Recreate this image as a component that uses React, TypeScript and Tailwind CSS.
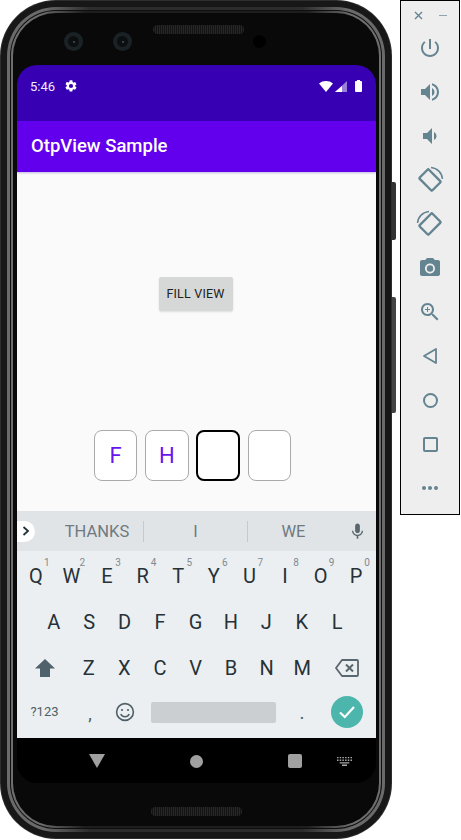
import React from 'react';

const TOP_ROW = [
  ['Q', '1'],
  ['W', '2'],
  ['E', '3'],
  ['R', '4'],
  ['T', '5'],
  ['Y', '6'],
  ['U', '7'],
  ['I', '8'],
  ['O', '9'],
  ['P', '0'],
];

function Icon({ children, size = 24, view = '0 0 24 24' }: { children: React.ReactNode; size?: number; view?: string }) {
  return (
    <svg width={size} height={size} viewBox={view} fill="currentColor">
      {children}
    </svg>
  );
}

function Key({ label, hint }: { label: string; hint?: string }) {
  return (
    <div className="relative flex flex-1 items-center justify-center text-[20px] text-[#263238]">
      {label}
      {hint && <span className="absolute left-[26px] top-[3px] text-[10px] leading-[14px] text-[#7f8a90]">{hint}</span>}
    </div>
  );
}

function ToolButton({ children }: { children: React.ReactNode }) {
  return <div className="flex h-[44px] items-center justify-center text-[#648491]">{children}</div>;
}

function RotateIcon({ flip }: { flip?: boolean }) {
  return (
    <svg width="30" height="30" viewBox="-15 -15 30 30" fill="none" stroke="currentColor">
      <rect x="-9" y="-6.5" width="18" height="13" rx="1" strokeWidth="2.4" transform={flip ? 'rotate(-45)' : 'rotate(45)'} />
      <path d={flip ? 'M-12.5 -1 A12.5 12.5 0 0 1 -1 -12.5' : 'M1 -12.5 A12.5 12.5 0 0 1 12.5 -1'} strokeWidth="1.5" />
    </svg>
  );
}

function Camera() {
  return (
    <div className="flex h-[19px] w-[19px] items-center justify-center rounded-full bg-[#1a2226]">
      <div className="flex h-[11px] w-[11px] items-center justify-center rounded-full bg-[#0c0f10]">
        <div className="h-[2px] w-[2px] rounded-full bg-[#4a4f52]" />
      </div>
    </div>
  );
}

function TopBezel() {
  return (
    <div className="flex h-[52px] items-start">
      <div className="ml-[47px] mt-[19px]">
        <Camera />
      </div>
      <div className="ml-[30px] mt-[19px]">
        <Camera />
      </div>
      <div className="ml-[21px] mt-[12px] h-[9px] w-[91px] rounded-full bg-[repeating-linear-gradient(90deg,#272727_0px,#272727_1px,#141414_1px,#141414_2px)]" />
      <div className="ml-[9px] mt-[22px] h-[13px] w-[13px] rounded-full bg-black" />
    </div>
  );
}

function StatusBar() {
  return (
    <div className="flex h-[56px] items-start bg-[#3700b3] pl-[13px] pr-[14px] pt-[14px] text-white">
      <span className="w-[34px] text-[13px] leading-[16px] text-[#f1ecf9]">5:46</span>
      <Icon size={14}>
        <path d="M19.14 12.94c.04-.3.06-.61.06-.94s-.02-.64-.07-.94l2.03-1.58a.5.5 0 0 0 .12-.64l-1.92-3.32a.5.5 0 0 0-.61-.22l-2.39.96a7 7 0 0 0-1.62-.94l-.36-2.54A.5.5 0 0 0 13.9 2h-3.84a.5.5 0 0 0-.49.42l-.36 2.54c-.59.24-1.13.57-1.62.94l-2.39-.96a.5.5 0 0 0-.61.22L2.67 8.48a.5.5 0 0 0 .12.64l2.03 1.58c-.05.3-.09.63-.09.94s.02.64.07.94l-2.03 1.58a.5.5 0 0 0-.12.64l1.92 3.32c.12.22.37.29.61.22l2.39-.96c.5.38 1.03.7 1.62.94l.36 2.54c.05.24.25.42.49.42h3.84c.24 0 .44-.18.49-.42l.36-2.54c.59-.24 1.13-.56 1.62-.94l2.39.96c.22.08.47 0 .59-.22l1.92-3.32a.5.5 0 0 0-.12-.64l-2.01-1.58zM12 15.6a3.6 3.6 0 1 1 0-7.2 3.6 3.6 0 0 1 0 7.2z" />
      </Icon>
      <div className="ml-auto mt-[2px] flex items-start gap-[2px]">
        <svg width="14" height="11" viewBox="0 0 14 11" fill="white">
          <path d="M0 2.5 C4 -0.8 10 -0.8 14 2.5 L7 11 Z" />
        </svg>
        <svg width="12" height="11" viewBox="0 0 12 11">
          <path d="M12 0 L12 11 L0 11 Z" fill="#9a7fdc" />
          <path d="M7 5 L7 11 L0 11 Z" fill="white" />
        </svg>
        <div className="ml-[6px] -mt-[1px] flex flex-col items-center">
          <div className="h-[1px] w-[3px] bg-white" />
          <div className="h-[11px] w-[7px] rounded-[1px] bg-white" />
        </div>
      </div>
    </div>
  );
}

function OtpBox({ value, active }: { value?: string; active?: boolean }) {
  return (
    <div
      className={
        active
          ? 'flex h-[51px] w-[43.5px] items-center justify-center rounded-[8px] border-2 border-black bg-white'
          : 'flex h-[51px] w-[43.5px] items-center justify-center rounded-[8px] border border-[#aaaaaa] bg-white text-[22px] text-[#6a14f0]'
      }
    >
      {value}
    </div>
  );
}

function Keyboard() {
  return (
    <div className="flex h-[227px] flex-col bg-[#eceff1]">
      <div className="flex h-[40px] items-center bg-[#e1e4e7] text-[16.5px] text-[#6f7a80]">
        <div className="flex h-[21px] w-[18px] items-center justify-center rounded-r-full bg-white text-[#263238]">
          <svg width="8" height="10" viewBox="0 0 8 10" fill="none" stroke="currentColor" strokeWidth="1.8">
            <path d="M1.5 1 L6 5 L1.5 9" />
          </svg>
        </div>
        <div className="ml-[16px] flex h-[21px] w-[93px] items-center justify-center border-r border-[#c5cacd] pt-[2px]">THANKS</div>
        <div className="flex h-[21px] w-[104px] items-center justify-center border-r border-[#c5cacd] pt-[2px]">I</div>
        <div className="flex h-[21px] w-[91px] items-center justify-center pt-[2px]">WE</div>
        <div className="flex flex-1 items-center justify-center pr-[1px] text-[#59676e]">
          <Icon size={19}>
            <path d="M12 14c1.66 0 3-1.34 3-3V5c0-1.66-1.34-3-3-3S9 3.34 9 5v6c0 1.66 1.34 3 3 3z" />
            <path d="M17.3 11c0 3-2.54 5.1-5.3 5.1S6.7 14 6.7 11H5c0 3.42 2.72 6.23 6 6.72V21h2v-3.28c3.28-.49 6-3.3 6-6.72h-1.7z" />
          </Icon>
        </div>
      </div>
      <div className="mt-[2px] flex h-[46px] pl-[1px] pr-[2px]">
        {TOP_ROW.map(([label, hint]) => (
          <Key key={label} label={label} hint={hint} />
        ))}
      </div>
      <div className="flex h-[46px] pl-[19px] pr-[21px]">
        {'ASDFGHJKL'.split('').map((l) => (
          <Key key={l} label={l} />
        ))}
      </div>
      <div className="flex h-[46px]">
        <div className="flex w-[54px] items-center justify-center pl-[2px] text-[#4f616a]">
          <svg width="20" height="18" viewBox="0 0 20 18" fill="currentColor">
            <path d="M10 0 L20 9.5 L15 9.5 L15 18 L5 18 L5 9.5 L0 9.5 Z" />
          </svg>
        </div>
        <div className="flex flex-1">
          {'ZXCVBNM'.split('').map((l) => (
            <Key key={l} label={l} />
          ))}
        </div>
        <div className="flex w-[56px] items-center justify-center pr-[2px] text-[#59676e]">
          <svg width="24" height="18" viewBox="0 0 24 18" fill="none" stroke="currentColor" strokeWidth="1.8">
            <path d="M7 1 H22 A1 1 0 0 1 23 2 V16 A1 1 0 0 1 22 17 H7 L1 9 Z" strokeLinejoin="round" />
            <path d="M11 5.5 L18 12.5 M18 5.5 L11 12.5" strokeWidth="2" />
          </svg>
        </div>
      </div>
      <div className="flex h-[42px] items-center">
        <div className="flex w-[55px] items-center justify-center text-[13px] text-[#4f5f68]">?123</div>
        <div className="flex w-[36px] items-center justify-center pt-[6px] text-[16px] font-medium text-[#4f5f68]">,</div>
        <div className="flex w-[34px] items-center justify-center text-[#4f5f68]">
          <svg width="20" height="20" viewBox="0 0 20 20" fill="none" stroke="currentColor" strokeWidth="1.6">
            <circle cx="10" cy="10" r="8.4" />
            <circle cx="7" cy="8" r="1.1" fill="currentColor" stroke="none" />
            <circle cx="13" cy="8" r="1.1" fill="currentColor" stroke="none" />
            <path d="M5.8 12 A4.6 4.6 0 0 0 14.2 12" />
          </svg>
        </div>
        <div className="ml-[9px] h-[21px] w-[125px] rounded-[2px] bg-[#cbcfd1]" />
        <div className="flex w-[52px] items-center justify-center pt-[4px] text-[16px] font-medium text-[#4f5f68]">.</div>
        <div className="ml-[3px] flex h-[32px] w-[32px] items-center justify-center rounded-full bg-[#4db6ac] text-white">
          <svg width="18" height="14" viewBox="0 0 18 14" fill="none" stroke="currentColor" strokeWidth="2.2">
            <path d="M2 7.5 L6.8 12 L16 2" />
          </svg>
        </div>
      </div>
    </div>
  );
}

function NavBar() {
  return (
    <div className="flex h-[45px] items-center bg-black pt-[1px]">
      <svg width="16" height="14" viewBox="0 0 16 14" fill="#a0a0a0" className="ml-[72px]">
        <path d="M0 0 H16 L8 14 Z" />
      </svg>
      <div className="ml-[85px] h-[13px] w-[13px] rounded-full bg-[#a0a0a0]" />
      <div className="ml-[85px] h-[14px] w-[14px] rounded-[2px] bg-[#a0a0a0]" />
      <svg width="15" height="9" viewBox="0 0 15 9" fill="#a8a8a8" className="ml-[35px]">
        <path d="M0 0h1.5v1.3H0zM2.7 0h1.5v1.3H2.7zM5.4 0h1.5v1.3H5.4zM8.1 0h1.5v1.3H8.1zM10.8 0h1.5v1.3h-1.5zM13.5 0H15v1.3h-1.5zM0 2.6h1.5v1.3H0zM2.7 2.6h1.5v1.3H2.7zM5.4 2.6h1.5v1.3H5.4zM8.1 2.6h1.5v1.3H8.1zM10.8 2.6h1.5v1.3h-1.5zM13.5 2.6H15v1.3h-1.5zM2.7 5.2h9.6v1.2H2.7zM5 7.6h5V9H5z" />
      </svg>
    </div>
  );
}

function Screen() {
  return (
    <div className="flex h-[718px] flex-col overflow-hidden rounded-[20px]">
      <StatusBar />
      <div className="z-10 flex h-[51px] items-center bg-[#6200ee] pl-[14px] text-[18.5px] font-medium text-white shadow-[0_1px_2px_rgba(60,30,160,0.3)]">
        OtpView Sample
      </div>
      <div className="flex h-[339px] flex-col items-center bg-[#fafafa] pt-[105px]">
        <div className="mr-[2px] flex h-[34px] w-[74px] items-center justify-center rounded-[2px] bg-[#d6d7d7] text-[12.5px] tracking-[0.2px] text-[#222222] shadow-[0_1px_2px_rgba(0,0,0,0.12)]">
          FILL VIEW
        </div>
        <div className="mr-[8px] mt-[119px] flex gap-[7.75px]">
          <OtpBox value="F" />
          <OtpBox value="H" />
          <OtpBox active />
          <OtpBox />
        </div>
      </div>
      <Keyboard />
      <NavBar />
    </div>
  );
}

function Phone() {
  return (
    <div className="relative h-[839px] w-[392px] rounded-[56px] bg-[#2e2e2e] p-[1px]">
      <div className="h-full rounded-[55px] bg-[#171717] p-[6px]">
        <div className="h-full rounded-[49px] bg-[linear-gradient(90deg,#6a6a6a_0%,#6a6a6a_10%,#2c2c2c_22%,#2c2c2c_78%,#6a6a6a_90%,#6a6a6a_100%)] p-[3px]">
          <div className="h-full rounded-[46px] bg-[#0f0f0f] p-[1px]">
            <div className="h-full rounded-[45px] bg-[linear-gradient(90deg,#6e6e6e_0%,#6e6e6e_8%,#1e1e1e_20%,#1e1e1e_80%,#6e6e6e_92%,#6e6e6e_100%)] p-[2px]">
              <div className="h-full rounded-[43px] bg-[#090909] pl-[4px] pr-[3px]">
                <TopBezel />
                <Screen />
                <div className="mx-auto mt-[24px] h-[9px] w-[91px] rounded-full bg-[repeating-linear-gradient(90deg,#272727_0px,#272727_1px,#141414_1px,#141414_2px)]" />
              </div>
            </div>
          </div>
        </div>
      </div>
      <div className="absolute left-[392px] top-[182px] h-[58px] w-[4px] rounded-r-[2px] bg-[#333333]" />
      <div className="absolute left-[392px] top-[297px] h-[116px] w-[4px] rounded-r-[2px] bg-[#444444]" />
    </div>
  );
}

function Toolbar() {
  return (
    <div className="ml-[8px] h-[515px] w-[60px] border border-black bg-[#eeeeee] pt-[4px]">
      <div className="flex h-[21px] items-center justify-between pl-[12px] pr-[12px] text-[#648491]">
        <svg width="11" height="11" viewBox="0 0 11 11" stroke="currentColor" strokeWidth="1.4">
          <path d="M2 2 L9 9 M9 2 L2 9" />
        </svg>
        <div className="h-[1.5px] w-[8px] bg-[#8fa4ad]" />
      </div>
      <div>
        <ToolButton>
          <Icon>
            <path d="M13 3h-2v10h2V3zm4.83 2.17l-1.42 1.42C17.99 7.86 19 9.81 19 12c0 3.87-3.13 7-7 7s-7-3.13-7-7c0-2.19 1.01-4.14 2.58-5.42L6.17 5.17C4.23 6.82 3 9.26 3 12c0 4.97 4.03 9 9 9s9-4.03 9-9c0-2.74-1.23-5.18-3.17-6.83z" />
          </Icon>
        </ToolButton>
        <ToolButton>
          <Icon>
            <path d="M3 9v6h4l5 5V4L7 9H3zm13.5 3c0-1.77-1.02-3.29-2.5-4.03v8.05c1.48-.73 2.5-2.25 2.5-4.02zM14 3.23v2.06c2.89.86 5 3.54 5 6.71s-2.11 5.85-5 6.71v2.06c4.01-.91 7-4.49 7-8.77s-2.99-7.86-7-8.77z" />
          </Icon>
        </ToolButton>
        <ToolButton>
          <Icon>
            <path d="M18.5 12c0-1.77-1.02-3.29-2.5-4.03v8.05c1.48-.73 2.5-2.25 2.5-4.02zM5 9v6h4l5 5V4L9 9H5z" />
          </Icon>
        </ToolButton>
        <ToolButton>
          <RotateIcon />
        </ToolButton>
        <ToolButton>
          <RotateIcon flip />
        </ToolButton>
        <ToolButton>
          <Icon>
            <circle cx="12" cy="12.5" r="3.2" />
            <path d="M9 2L7.17 4H4c-1.1 0-2 .9-2 2v12c0 1.1.9 2 2 2h16c1.1 0 2-.9 2-2V6c0-1.1-.9-2-2-2h-3.17L15 2H9zm3 15.5c-2.76 0-5-2.24-5-5s2.24-5 5-5 5 2.24 5 5-2.24 5-5 5z" />
          </Icon>
        </ToolButton>
        <ToolButton>
          <Icon>
            <path d="M15.5 14h-.79l-.28-.27C15.41 12.59 16 11.11 16 9.5 16 5.91 13.09 3 9.5 3S3 5.91 3 9.5 5.91 16 9.5 16c1.61 0 3.09-.59 4.23-1.57l.27.28v.79l5 4.99L20.49 19l-4.99-5zm-6 0C7.01 14 5 11.99 5 9.5S7.01 5 9.5 5 14 7.01 14 9.5 11.99 14 9.5 14z" />
            <path d="M12 10h-2v2H9v-2H7V9h2V7h1v2h2v1z" />
          </Icon>
        </ToolButton>
        <ToolButton>
          <svg width="16" height="18" viewBox="0 0 16 18" fill="none" stroke="currentColor" strokeWidth="1.8">
            <path d="M14 2 V16 L2 9 Z" strokeLinejoin="round" />
          </svg>
        </ToolButton>
        <ToolButton>
          <div className="h-[15px] w-[15px] rounded-full border-2 border-[#648491]" />
        </ToolButton>
        <ToolButton>
          <div className="h-[15px] w-[15px] rounded-[2px] border-2 border-[#648491]" />
        </ToolButton>
        <ToolButton>
          <div className="flex gap-[2px]">
            <div className="h-[4px] w-[4px] rounded-full bg-[#648491]" />
            <div className="h-[4px] w-[4px] rounded-full bg-[#648491]" />
            <div className="h-[4px] w-[4px] rounded-full bg-[#648491]" />
          </div>
        </ToolButton>
      </div>
    </div>
  );
}

export default function App() {
  return (
    <div className="flex h-[840px] w-[461px] items-start overflow-hidden bg-white font-['Roboto',sans-serif]">
      <Phone />
      <Toolbar />
    </div>
  );
}
